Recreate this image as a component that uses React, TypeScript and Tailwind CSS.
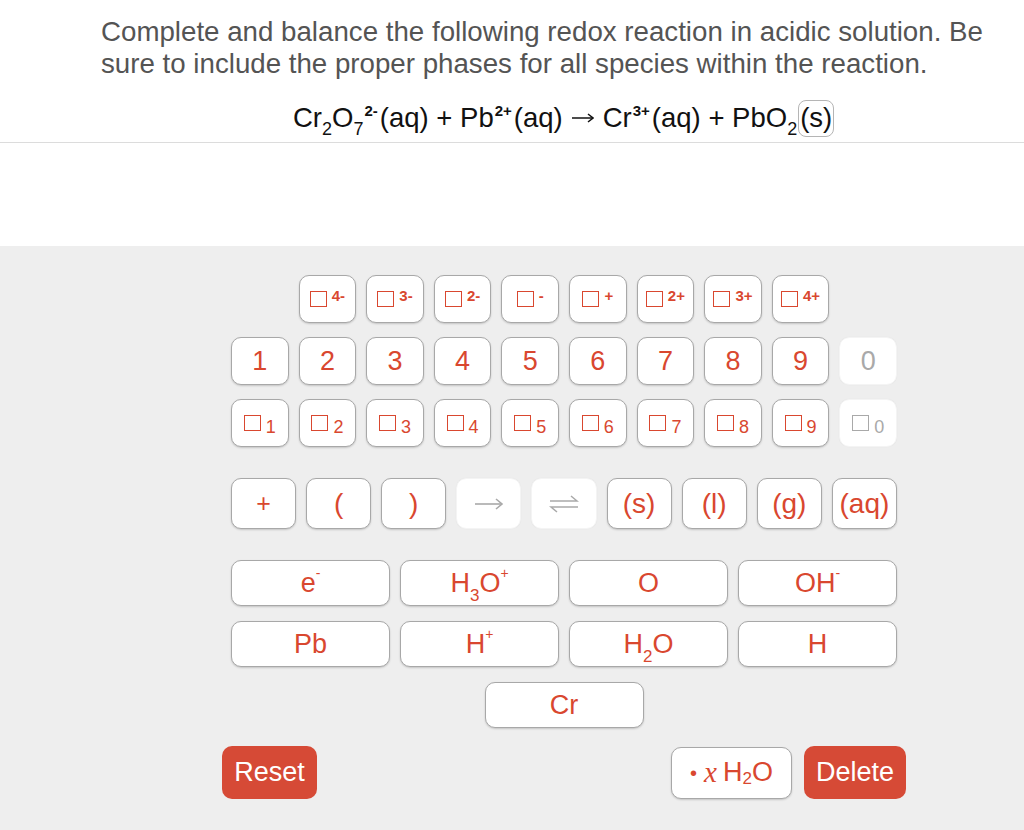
import React from "react";

const FONT = { fontFamily: '"Liberation Sans", Arial, Helvetica, sans-serif' };

function Key({
  children,
  className = "",
  disabled = false,
}: {
  children: React.ReactNode;
  className?: string;
  disabled?: boolean;
}) {
  const base = "flex items-center justify-center rounded-[10px] bg-white leading-none";
  const look = disabled
    ? "text-[#a9a9a9] border border-[#f4f4f4] shadow-[0_0_1px_rgba(0,0,0,0.08)]"
    : "text-[#d9472f] border border-[#a8a8a8] shadow-[0_1px_2px_rgba(0,0,0,0.18)]";
  return <div className={`${base} ${look} ${className}`}>{children}</div>;
}

function Box() {
  return <span className="inline-block w-[17px] h-[16px] border-[1.5px] border-current" />;
}

function SupKey({ label }: { label: string }) {
  return (
    <Key className="h-[48px]">
      <span className="flex items-start">
        <Box />
        <span className="ml-[5px] -mt-[3px] text-[15px] leading-none font-bold">{label}</span>
      </span>
    </Key>
  );
}

function SubKey({ label, disabled = false }: { label: string; disabled?: boolean }) {
  return (
    <Key className="h-[48px]" disabled={disabled}>
      <span className="flex items-end">
        <Box />
        <span className="ml-[5px] -mb-[5px] text-[18px] leading-none">{label}</span>
      </span>
    </Key>
  );
}

function Arrow() {
  return (
    <svg width="30" height="14" viewBox="0 0 30 14" fill="none" stroke="currentColor" strokeWidth="1.6">
      <path d="M1 7 H28" />
      <path d="M22 2 L28 7 L22 12" />
    </svg>
  );
}

function Equil() {
  return (
    <svg width="30" height="18" viewBox="0 0 30 18" fill="none" stroke="currentColor" strokeWidth="1.5">
      <path d="M1 6 H28 L22 1" />
      <path d="M29 12 H2 L8 17" />
    </svg>
  );
}

const Sup = ({ children }: { children: React.ReactNode }) => (
  <span className="text-[15px] relative -top-[8px] font-bold ml-[1px] mr-[2px]">{children}</span>
);
const Sub = ({ children }: { children: React.ReactNode }) => (
  <span className="text-[18px] relative top-[11px]">{children}</span>
);

export default function App() {
  const sups = ["4-", "3-", "2-", "-", "+", "2+", "3+", "4+"];
  const digits = ["1", "2", "3", "4", "5", "6", "7", "8", "9"];
  return (
    <div className="w-[1024px] h-[830px] bg-white overflow-hidden" style={FONT}>
      {/* Question */}
      <div className="border-b border-[#dcdcdc] pb-[6px]">
        <div className="pl-[101px] pt-[16px]">
          <p className="w-[900px] text-[27.7px] leading-[32px] text-[#545454]">
            Complete and balance the following redox reaction in acidic solution. Be sure to include the proper phases for all species within the reaction.
          </p>
        </div>
        <div className="mt-[20px] h-[36px] pl-[293px] flex items-center text-[27.5px] text-[#111] leading-none">
          <span>Cr</span>
          <Sub>2</Sub>
          <span>O</span>
          <Sub>7</Sub>
          <Sup>2-</Sup>
          <span>(aq) + Pb</span>
          <Sup>2+</Sup>
          <span>(aq)</span>
          <span className="mx-[9px] flex items-center">
            <svg width="22" height="12" viewBox="0 0 22 12" fill="none" stroke="currentColor" strokeWidth="1.5">
              <path d="M0 6 H21" />
              <path d="M16 2 L21 6 L16 10" />
            </svg>
          </span>
          <span>Cr</span>
          <Sup>3+</Sup>
          <span>(aq) + PbO</span>
          <Sub>2</Sub>
          <span className="ml-[1px] px-[1px] h-[37px] flex items-center rounded-[8px] border border-[#b5b5b5]">(s)</span>
        </div>
      </div>
      <div className="h-[103px]" />

      {/* Keypad */}
      <div className="bg-[#eeeeee] h-[584px] pt-[29px] pl-[104px]">
        <div className="w-[920px] flex flex-col items-center">
          <div className="w-[666px] grid grid-cols-10 gap-x-[10px] gap-y-[14px]">
            <div />
            {sups.map((s) => (
              <SupKey key={s} label={s} />
            ))}
            <div />
            {digits.map((d) => (
              <Key key={d} className="h-[48px] text-[27px]">
                {d}
              </Key>
            ))}
            <Key disabled className="h-[48px] text-[27px]">
              0
            </Key>
            {digits.map((d) => (
              <SubKey key={"s" + d} label={d} />
            ))}
            <SubKey label="0" disabled />
          </div>

          <div className="mt-[31px] w-[666px] grid grid-cols-9 gap-x-[10px] text-[28px]">
            <Key className="h-[51px] text-[25px]">+</Key>
            <Key className="h-[51px]">(</Key>
            <Key className="h-[51px]">)</Key>
            <Key disabled className="h-[51px]">
              <Arrow />
            </Key>
            <Key disabled className="h-[51px]">
              <Equil />
            </Key>
            <Key className="h-[51px]">(s)</Key>
            <Key className="h-[51px]">(l)</Key>
            <Key className="h-[51px]">(g)</Key>
            <Key className="h-[51px]">(aq)</Key>
          </div>

          <div className="mt-[31px] w-[666px] grid grid-cols-4 gap-x-[10px] gap-y-[15px] text-[27px]">
            <Key className="h-[46px]">
              <span>e</span>
              <span className="text-[14px] relative -top-[10px]">-</span>
            </Key>
            <Key className="h-[46px]">
              <span>H</span>
              <span className="text-[17px] relative top-[12px]">3</span>
              <span>O</span>
              <span className="text-[14px] relative -top-[10px]">+</span>
            </Key>
            <Key className="h-[46px]">O</Key>
            <Key className="h-[46px]">
              <span>OH</span>
              <span className="text-[14px] relative -top-[10px]">-</span>
            </Key>
            <Key className="h-[46px]">Pb</Key>
            <Key className="h-[46px]">
              <span>H</span>
              <span className="text-[14px] relative -top-[10px]">+</span>
            </Key>
            <Key className="h-[46px]">
              <span>H</span>
              <span className="text-[17px] relative top-[12px]">2</span>
              <span>O</span>
            </Key>
            <Key className="h-[46px]">H</Key>
            <Key className="h-[46px] col-start-2 col-span-2 w-[159px] justify-self-center">Cr</Key>
          </div>

          <div className="mt-[18px] w-[684px] flex items-center text-[27px]">
            <div className="h-[53px] w-[95px] rounded-[10px] bg-[#d64a36] text-white flex items-center justify-center">
              Reset
            </div>
            <div className="flex-1" />
            <Key className="h-[52px] w-[121px] text-[27px]">
              <span className="text-[20px] mr-[7px]">•</span>
              <span className="italic mr-[6px] text-[29px]" style={{ fontFamily: '"Liberation Serif", "Times New Roman", serif' }}>
                x
              </span>
              <span>H</span>
              <span className="text-[17px] relative top-[6px]">2</span>
              <span>O</span>
            </Key>
            <div className="ml-[12px] h-[53px] w-[102px] rounded-[10px] bg-[#d64a36] text-white flex items-center justify-center">
              Delete
            </div>
          </div>
        </div>
      </div>
    </div>
  );
}
